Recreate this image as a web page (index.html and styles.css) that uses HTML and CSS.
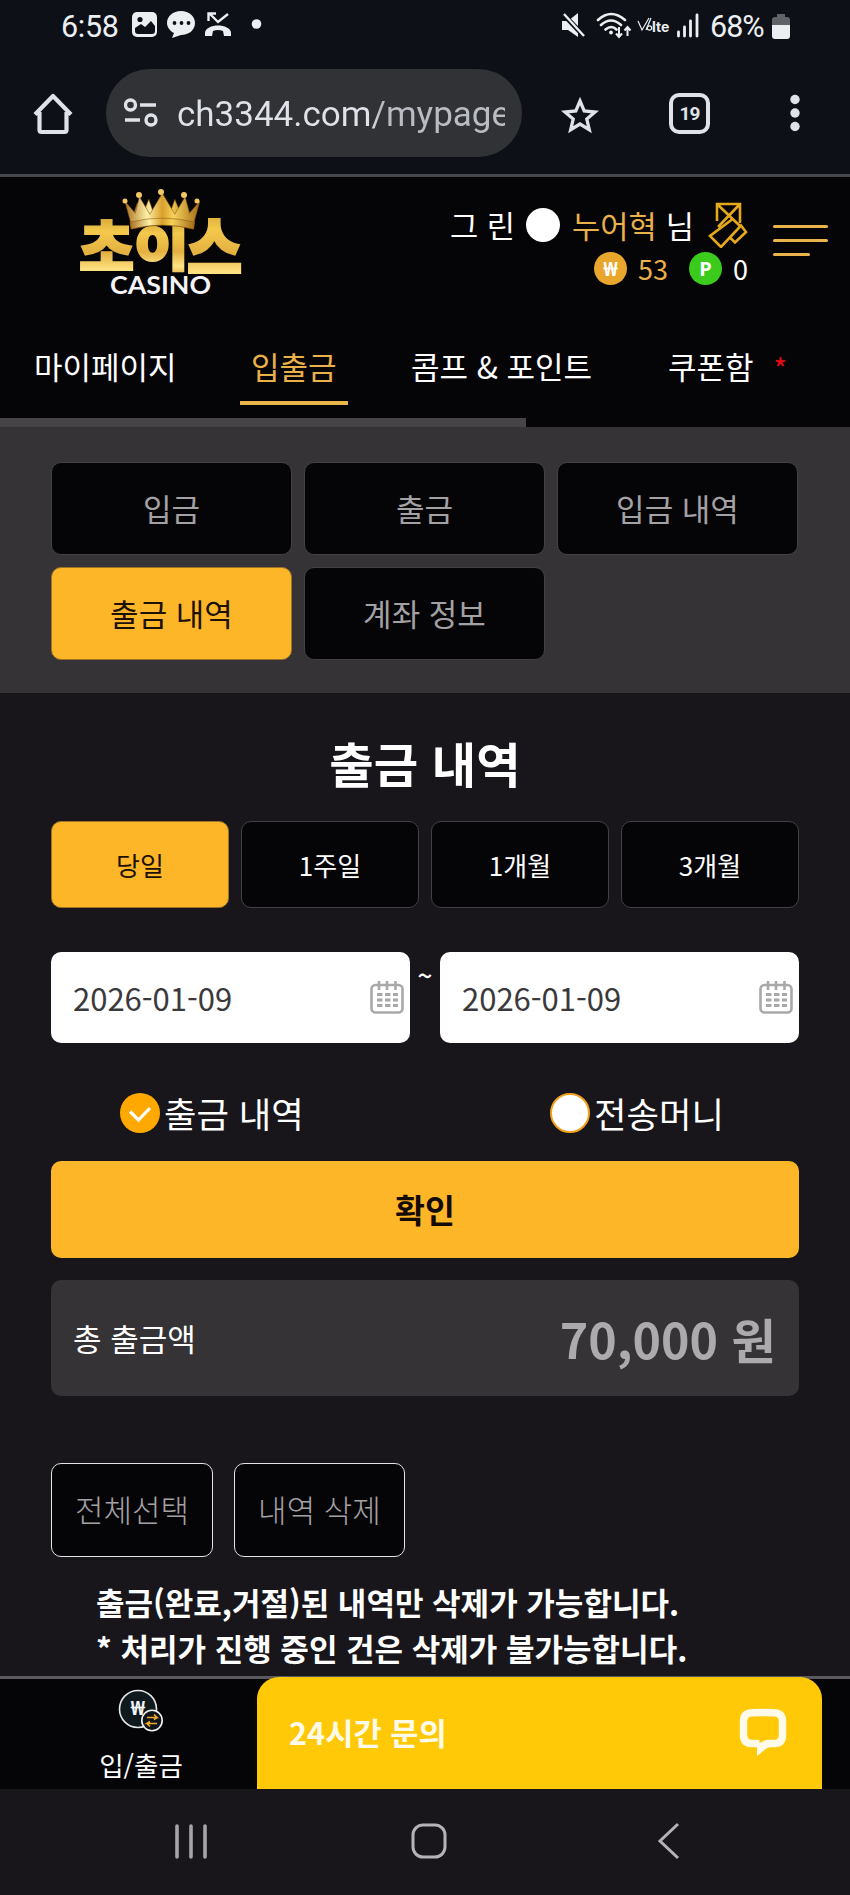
FILE: index.html
```html
<!DOCTYPE html>
<html lang="ko">
<head>
<meta charset="utf-8">
<title>출금 내역</title>
<link rel="stylesheet" href="styles.css">
</head>
<body>
<div class="phone">
  <div class="status">
    <span class="clock">6:58</span>
    <svg class="status-left" width="132" height="30" viewBox="0 0 132 30" fill="#eceff2">
      <rect x="0" y="2" width="25" height="25" rx="5"/>
      <circle cx="8" cy="9.500" r="2.600" fill="#0d1117"/>
      <path d="M3 18l6-4 4 3 6-6 4 5v5q0 3-3 3H6q-3 0-3-3z" fill="#0d1117"/>
      <path d="M49 1c8 0 14 5 14 12s-6 12-14 12l-9 3 2-5c-4-2-7-6-7-10 0-7 6-12 14-12z"/>
      <g fill="#0d1117"><circle cx="42.500" cy="13" r="1.900"/><circle cx="49.500" cy="13" r="1.900"/><circle cx="56.500" cy="13" r="1.900"/></g>
      <path d="M78 4l8 8L96 4M76.500 11V3.500H84" fill="none" stroke="#eceff2" stroke-width="2.400"/>
      <path d="M73 23c0-5 7-7.500 13-7.500S99 18 99 23v3h-7l-1-5q-5-2-10 0l-1 5h-7z"/>
      <circle cx="124.500" cy="14" r="4.800"/>
    </svg>
    <svg class="status-right" width="140" height="30" viewBox="0 0 140 30" fill="none" stroke="#eceff2">
      <path d="M0 10h6l10-8v24l-10-7H0z" fill="#eceff2" stroke="none"/>
      <path d="M1 3l21 22" stroke="#0d1117" stroke-width="5"/>
      <path d="M2 3l20 22" stroke-width="2.400"/>
      <path d="M36 9q13-12 27 0M39 14q10-9 20 0M43.500 18.500q6-5 11 0" stroke-width="2.600" stroke-linecap="round"/>
      <circle cx="49" cy="21.500" r="1.900" fill="#eceff2" stroke="none"/>
      <path d="M57 16v10m-3-3.500l3 3.500 3-3.500M65.500 25V16m-3 3.500l3-3.500 3 3.500" stroke-width="2"/>
      <path d="M76 10l4 9 7-12M84 19l5-12" stroke-width="1.200"/>
      <circle cx="87.500" cy="17" r="2.200" stroke-width="1.200"/>
      <text x="90" y="21" class="lte">lte</text>
      <path d="M116.500 21v4M122.500 16v9M128.500 10v15M135 4v21" stroke-width="2.800" stroke-linecap="round"/>
    </svg>
    <span class="percent">68%</span>
    <svg class="battery" width="18" height="26" viewBox="0 0 18 26"><path d="M5 0h8v3h2q3 0 3 3v6H0V6q0-3 3-3h2z" fill="#606468"/><path d="M0 11h18v11q0 3-3 3H3q-3 0-3-3z" fill="#eceff2"/></svg>
  </div>

  <div class="browser">
    <svg class="home" width="40" height="42" viewBox="0 0 40 42" fill="none" stroke="#dfe2e8" stroke-width="4.200" stroke-linejoin="round"><path d="M2 21.500L20 3l18 18.500M6.500 19v18q0 2 2 2h23q2 0 2-2V19"/></svg>
    <div class="address">
      <svg width="35" height="30" viewBox="0 0 35 30" fill="none" stroke="#dfe2e8" stroke-width="3.400"><circle cx="6.500" cy="7" r="5"/><path d="M16 7h16M1 22h15"/><circle cx="27" cy="22" r="5"/></svg>
      <div class="url">ch3344.com/mypage</div>
    </div>
    <svg class="star" width="40" height="38" viewBox="0 0 40 38" fill="none" stroke="#dfe2e8" stroke-width="3.300"><path d="M20 5l4.200 10 10.800 1-8.200 7.100 2.500 10.600L20 28l-9.300 5.700 2.500-10.600L5 16l10.800-1z"/></svg>
    <div class="tabs-count">19</div>
    <svg class="more" width="10" height="38" viewBox="0 0 10 38" fill="#dfe2e8"><circle cx="5" cy="5.500" r="4.700"/><circle cx="5" cy="19" r="4.700"/><circle cx="5" cy="32.500" r="4.700"/></svg>
  </div>

  <header class="site">
    <div class="brand-row">
      <svg class="logo" width="170" height="112" viewBox="0 0 170 112">
        <defs>
          <linearGradient id="gold" x1="0" y1="0" x2="0" y2="1"><stop offset="0" stop-color="#b98527"/><stop offset=".35" stop-color="#f3c94c"/><stop offset=".6" stop-color="#e3b040"/><stop offset=".8" stop-color="#ffe382"/><stop offset="1" stop-color="#d99a2c"/></linearGradient>
          <linearGradient id="crown" x1="0" y1="0" x2="1" y2="0"><stop offset="0" stop-color="#a8701f"/><stop offset=".3" stop-color="#fff0a8"/><stop offset=".5" stop-color="#d8a02c"/><stop offset=".65" stop-color="#f6d25a"/><stop offset="1" stop-color="#a46a18"/></linearGradient>
        </defs>
        <g class="logo-name" fill="url(#gold)" stroke="url(#gold)">
          <text transform="translate(0 81) scale(1 .98)">초</text>
          <text transform="translate(55 77) scale(1 .84)">이</text>
          <text transform="translate(108 84) scale(1 1.12)">스</text>
        </g>
        <g fill="url(#crown)" stroke="#8a5a14" stroke-width=".6" transform="translate(-3 0) scale(1.040 .87)">
          <path d="M55 30l4-14 5 13 6-17 5 17zM110 30l-4-14-5 13-6-17-5 17z"/>
          <path d="M52 36l-5-22 10 14 4-19 10 20L83 5l12 24 10-20 4 19 10-14-5 22-1 10q-30-9-60 0z"/>
          <path d="M52 38q31-9 62 0l-1 8q-30-9-60 0z"/>
        </g>
        <g fill="#f2c766"><circle cx="46" cy="12" r="2.500"/><circle cx="60" cy="6" r="3"/><circle cx="82" cy="3" r="3"/><circle cx="105" cy="6" r="3"/><circle cx="118" cy="12" r="2.500"/></g>
        <text x="31" y="104.500" class="logo-sub" textLength="101" lengthAdjust="spacingAndGlyphs">CASINO</text>
      </svg>
      <div class="account">
        <div class="user"><span>그 린</span><i class="level"></i><span class="gold">누어혁</span><span class="nim">님</span>
          <svg width="40" height="46" viewBox="0 0 40 46" fill="none" stroke="#e5a91b" stroke-width="2.600"><path d="M9 19V2h23v19M9 2l23 22M32 2L10 25M24 17.500L2 34l11 11L33 23.500l5 6.500-11 10.500-5-5"/></svg>
        </div>
        <div class="points"><i class="coin won">₩</i><span class="gold">53</span><i class="coin pt">P</i><span>0</span></div>
      </div>
      <div class="burger"><i></i><i></i><i class="short"></i></div>
    </div>
    <nav class="menu"><a>마이페이지</a><a class="current">입출금</a><a>콤프 &amp; 포인트</a><a>쿠폰함<sup>*</sup></a></nav>
    <div class="scroll"><i></i></div>
  </header>

  <section class="subtabs">
    <a>입금</a><a>출금</a><a>입금 내역</a><a class="on">출금 내역</a><a>계좌 정보</a>
  </section>

  <main>
    <h1>출금 내역</h1>
    <div class="periods"><a class="on">당일</a><a>1주일</a><a>1개월</a><a>3개월</a></div>
    <div class="dates">
      <div class="date"><span>2026-01-09</span><svg width="34" height="34" viewBox="0 0 34 34" fill="none" stroke="#a9a8aa"><rect x="1.500" y="5" width="31" height="27.500" rx="4" stroke-width="2.600"/><path d="M9 1v9M17 1v9M25.500 1v9" stroke-width="2.600"/><path d="M7 14.500h21M7 20h21M7 25.500h21" stroke-width="3" stroke-dasharray="5.500 2.500"/></svg></div>
      <b>~</b>
      <div class="date"><span>2026-01-09</span><svg width="34" height="34" viewBox="0 0 34 34" fill="none" stroke="#a9a8aa"><rect x="1.500" y="5" width="31" height="27.500" rx="4" stroke-width="2.600"/><path d="M9 1v9M17 1v9M25.500 1v9" stroke-width="2.600"/><path d="M7 14.500h21M7 20h21M7 25.500h21" stroke-width="3" stroke-dasharray="5.500 2.500"/></svg></div>
    </div>
    <div class="radios">
      <label><svg width="40" height="40" viewBox="0 0 40 40"><circle cx="20" cy="20" r="20" fill="#ffa900"/><path d="M10 18.500l8.500 8.500L30 15" fill="none" stroke="#fff" stroke-width="3.200"/></svg><span>출금 내역</span></label>
      <label><svg width="40" height="40" viewBox="0 0 40 40"><circle cx="20" cy="20" r="19" fill="#fff" stroke="#f2a11b" stroke-width="2"/></svg><span>전송머니</span></label>
    </div>
    <div class="submit">확인</div>
    <div class="total"><span>총 출금액</span><strong>70,000 원</strong></div>
    <div class="actions"><a>전체선택</a><a>내역 삭제</a></div>
    <p>출금(완료,거절)된 내역만 삭제가 가능합니다.<br>* 처리가 진행 중인 건은 삭제가 불가능합니다.</p>
  </main>

  <footer class="dock">
    <div class="cash">
      <svg width="46" height="43" viewBox="0 0 46 43"><circle cx="20" cy="20" r="18.500" fill="#10191e" stroke="#e4e8ea" stroke-width="1.600"/><text x="20" y="26" class="cash-won">₩</text><circle cx="34" cy="31.500" r="10.200" fill="#10151a" stroke="#f2f2f2" stroke-width="1.600"/><path d="M29 28.500h10l-3-3m3 3l-3 2M39 34.500H29l3-2m-3 2l3 3" fill="none" stroke="#f0a92a" stroke-width="1.700"/></svg>
      <span>입/출금</span>
    </div>
    <div class="chat"><span>24시간 문의</span><svg width="48" height="48" viewBox="0 0 48 48" fill="none" stroke="#fffbe8" stroke-width="7.500"><path d="M20.500 35.500H13Q4.500 35.500 4.500 27V13.500Q4.500 5 13 4.800q11-.6 22 0Q43.500 5 43.500 13.500V27q0 8.500-8 8.500h-7"/><path d="M18 36v12l10-8q3-1 4-1v-7h-5z" fill="#fffbe8" stroke="none"/></svg></div>
  </footer>
  <div class="sysnav">
    <svg width="34" height="36" viewBox="0 0 34 36" stroke="#a5a4a7" stroke-width="3.600" stroke-linecap="round"><path d="M3 3v31M17 3v31M31 3v31"/></svg>
    <svg width="36" height="36" viewBox="0 0 36 36" fill="none" stroke="#b4b3b6" stroke-width="3"><rect x="2" y="2" width="32" height="32" rx="10"/></svg>
    <svg width="24" height="38" viewBox="0 0 24 38" fill="none" stroke="#b4b3b6" stroke-width="3"><path d="M21 2L3 19l18 17"/></svg>
  </div>
</div>
</body>
</html>
```
FILE: styles.css
```css
* { box-sizing: border-box; }
body { margin: 0; background: #18161a; color: #fff; font: 31px/46px "Noto Sans CJK KR", sans-serif; }
.phone { width: 850px; height: 1895px; display: flex; flex-direction: column; overflow: hidden; }
svg { display: block; flex: none; }
span, a { white-space: nowrap; }
i { font-style: normal; }
.gold { color: #eab04a; }

.status { height: 52px; background: #0d1117; display: flex; align-items: center; padding-left: 61px; color: #eceff2; font: 30.5px/52px Roboto, sans-serif; }
.clock { width: 71px; padding-top: 1px; letter-spacing: -.3px; }
.status-left { margin-right: 298px; margin-top: -2px; }
.status-right { width: 140px; }
.lte { font: 700 14px Inter, sans-serif; fill: #eceff2; stroke: none; }
.percent { width: 62px; margin-left: 8px; padding-top: 1px; letter-spacing: -1px; }
.battery { margin-top: 1px; }

.browser { height: 125px; background: #0d1117; border-bottom: 3px solid #45474c; display: flex; padding-left: 33px; color: #dfe2e8; }
.home { margin: 41px 33px 0 0; }
.address { width: 416px; height: 88px; margin-top: 17px; border-radius: 44px; background: #303236; display: flex; align-items: center; padding: 0 17px 0 18px; gap: 18px; }
.url { width: 328px; padding-top: 3px; overflow: hidden; font: 35px/60px Roboto, sans-serif; white-space: nowrap; background: linear-gradient(90deg, #dfe2e8 59%, #b9bcc2 62%); background-clip: text; -webkit-background-clip: text; color: transparent; }
.star { margin: 44px 0 0 38px; }
.tabs-count { width: 41px; height: 41px; margin: 41px 0 0 69px; border: 4px solid #dfe2e8; border-radius: 10px; font: 700 19px/33px Roboto, sans-serif; text-align: center; letter-spacing: -1px; }
.more { margin: 42px 0 0 80px; }

.site { height: 250px; background: #050407; display: flex; flex-direction: column; }
.brand-row { height: 150px; display: flex; padding-left: 79px; }
.logo { margin-top: 12px; overflow: visible; }
.logo-name { font: 900 60px "Noto Sans CJK KR", sans-serif; stroke-width: 2.200px; }
.logo-sub { font: 700 24px Lato, sans-serif; fill: #f4f4f8; }
.account { width: 499px; padding-top: 25px; }
.user { height: 46px; display: flex; justify-content: flex-end; align-items: center; font-size: 30.7px; }
.level { width: 34px; height: 34px; border-radius: 50%; background: #fff; margin: 0 12px 0 11px; }
.nim { margin: 0 14px 0 9px; }
.points { height: 40px; display: flex; justify-content: flex-end; align-items: center; font-size: 27px; padding-top: 1px; }
.coin { width: 33px; height: 33px; border-radius: 50%; font: 700 20px/33px "Noto Sans", sans-serif; text-align: center; margin-right: 11px; }
.won { background: #e8a72c; }
.pt { background: #3acb1d; margin-left: 21px; }
.burger { display: flex; flex-direction: column; gap: 11px; margin: 48px 0 0 25px; }
.burger i { width: 55px; height: 3px; border-radius: 2px; background: #e9b44b; }
.burger .short { width: 37px; }
.menu { height: 91px; display: grid; grid-template-columns: 206px 171px 257px auto; padding: 16px 0 0 34px; }
.menu a { height: 62px; justify-self: start; }
.menu .current { color: #eab04a; padding: 0 11px; border-bottom: 4px solid #eab54b; }
sup { color: #e80c12; font-size: 29px; line-height: 20px; vertical-align: -1px; margin-left: 20px; }
.scroll { height: 9px; }
.scroll i { display: block; width: 526px; height: 9px; background: #464447; }

.subtabs { height: 266px; background: #353335; display: grid; grid-template-columns: repeat(3, 241px); grid-auto-rows: 93px; gap: 12px; padding: 35px 51px; }
.subtabs a, .periods a, .actions a { background: #050407; border: 1px solid #434144; border-radius: 10px; display: flex; align-items: center; justify-content: center; color: #a3a1a4; padding-bottom: 2px; }
.subtabs a.on, .periods a.on { background: #fdb628; border-color: #9d7426; color: #1d1005; }

main { height: 983px; padding: 0 51px; }
h1 { margin: 34px 0 0; font-size: 48.3px; line-height: 70px; text-align: center; font-weight: 700; }
.periods { display: grid; grid-template-columns: repeat(4, 1fr); gap: 12px; height: 87px; margin-top: 24px; }
.periods a { color: #fff; font-size: 26px; padding-bottom: 0; }
.dates { display: flex; height: 91px; margin-top: 44px; }
.date { width: 359px; background: #fff; border-radius: 10px; color: #3b393c; display: flex; align-items: center; justify-content: space-between; padding: 0 6px 0 22px; }
.date svg { margin-top: -2px; }
.dates b { width: 30px; text-align: center; font-size: 26px; font-weight: 500; }
.radios { height: 40px; margin-top: 50px; display: grid; grid-template-columns: 430px auto; grid-template-rows: 40px; padding-left: 69px; font-size: 35.3px; }
.radios label { display: flex; align-items: center; gap: 4px; height: 40px; }
.submit { height: 97px; margin-top: 28px; border-radius: 10px; background: #fdb628; color: #140b05; font-size: 32.5px; font-weight: 700; text-align: center; line-height: 95px; }
.total { height: 116px; margin-top: 22px; border-radius: 10px; background: #353335; display: flex; justify-content: space-between; align-items: center; padding: 0 23px 0 22px; }
.total strong { font-size: 48.3px; color: #acaaad; padding-bottom: 1px; }
.actions { display: flex; gap: 21px; margin-top: 67px; height: 94px; }
.actions a { border-color: #e4e3e5; border-width: 1.500px; width: 162px; font-weight: 300; }
.actions a + a { width: 171px; }
p { margin: 22px 0 0 45px; font-weight: 700; line-height: 46px; white-space: nowrap; }

.dock { height: 113px; background: linear-gradient(#5a595b 3px, #050407 3px); display: flex; flex: none; }
.cash { width: 257px; padding: 13px 0 0 25px; display: flex; flex-direction: column; align-items: center; font-size: 26.500px; line-height: 38px; }
.cash svg { margin-bottom: 14px; }
.cash-won { font: 700 20px "Noto Sans", sans-serif; fill: #f2f4f5; text-anchor: middle; }
.chat { width: 565px; height: 112px; margin-top: 1px; border-radius: 22px 22px 0 0; background: #ffc907; color: #fffbe8; display: flex; align-items: center; justify-content: space-between; padding: 0 35px 3px 32px; font-size: 30.7px; font-weight: 700; }
.sysnav { height: 106px; flex: none; background: #18161a; display: grid; grid-template-columns: 237px 246px auto; padding: 0 0 2px 174px; align-items: center; }
```
